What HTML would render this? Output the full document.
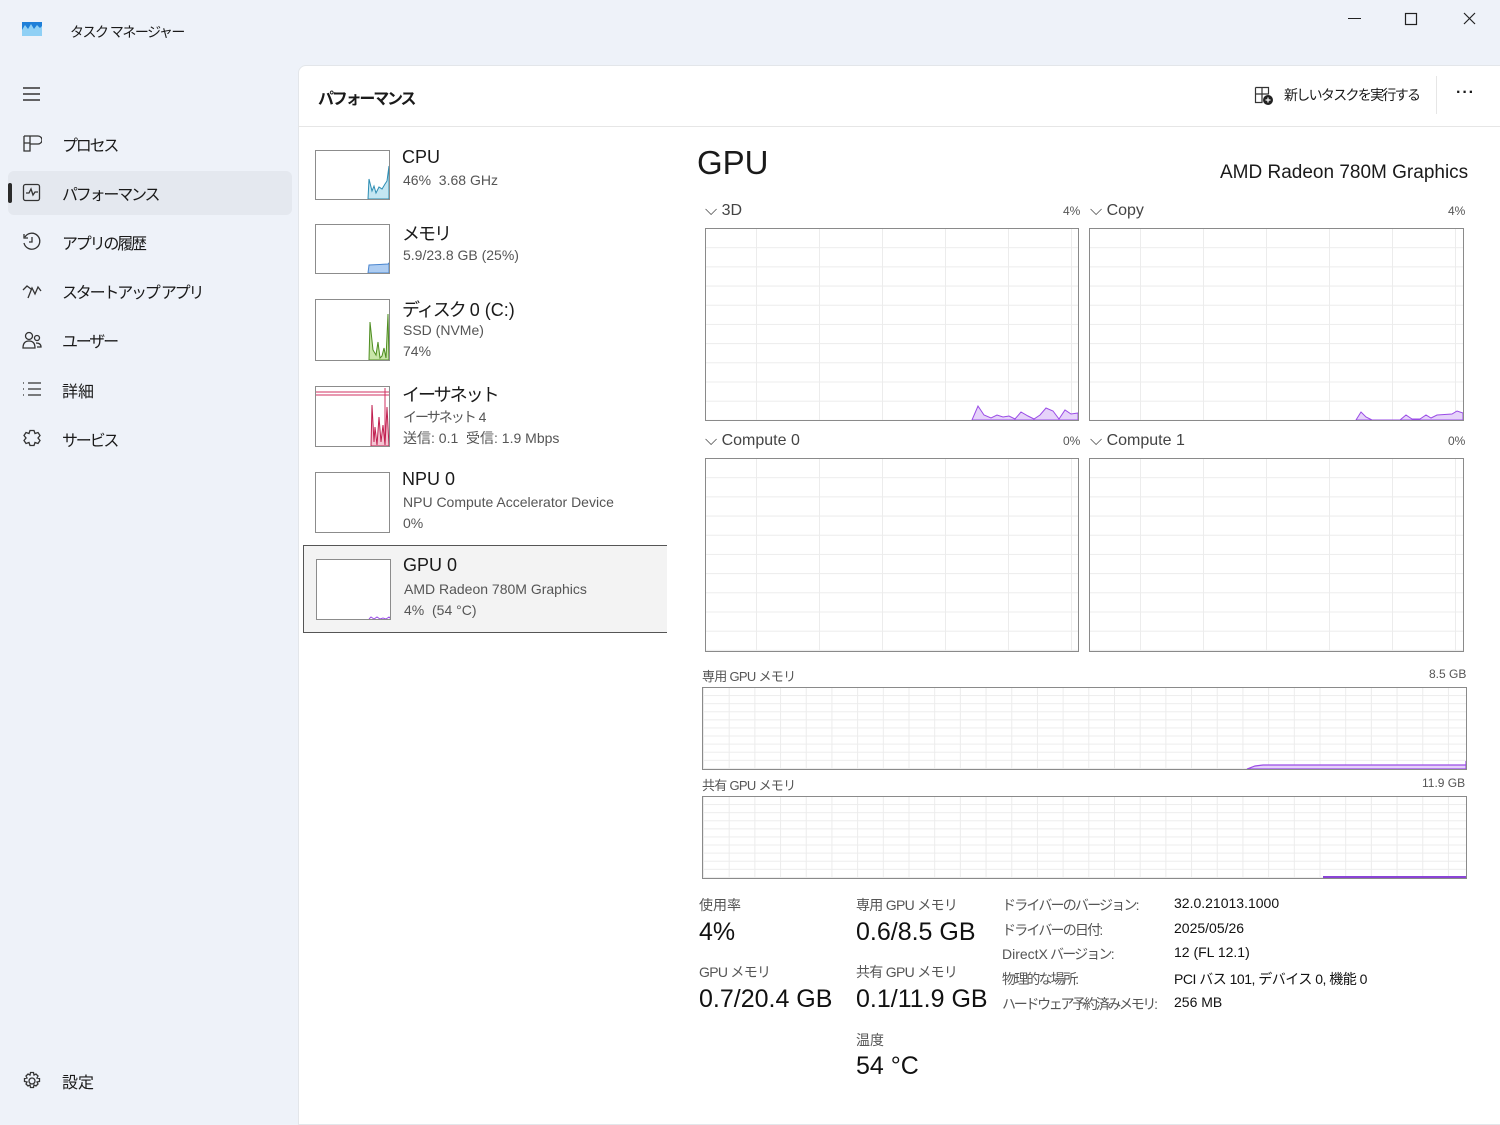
<!DOCTYPE html>
<html><head><meta charset="utf-8"><style>
*{box-sizing:border-box;margin:0;padding:0}
body{width:1500px;height:1112px;overflow:hidden;background:#eef2f9;font-family:"Segoe UI","Liberation Sans","Noto Sans CJK JP",sans-serif;color:#1a1a1a;position:relative}
.a{position:absolute;white-space:nowrap}
.nav{font-size:16px;color:#1a1a1a;letter-spacing:-2.2px}
.panel{position:absolute;left:298px;top:65px;width:1210px;height:1060px;background:#fff;border-top-left-radius:8px;border:1px solid #e3e6ea}
.hdr{position:absolute;left:298px;top:65px;width:1202px;height:62px;border-bottom:1px solid #e6e6e6}
.th{position:absolute;width:75px;border:1px solid #8c8c8c;background:#fff;overflow:hidden}
.t1{font-size:18px}
.t2{font-size:14px;color:#555}
.j{letter-spacing:-2px}
.g{position:absolute;border:1px solid #8a8a8a;background-color:#fff;
background-image:linear-gradient(to right,#ececec 1px,transparent 1px),linear-gradient(to bottom,#ececec 1px,transparent 1px);}
.lbl{font-size:16px;color:#444}
.pc{font-size:12px;color:#555}
.sl{font-size:14px;color:#555}
.sv{font-size:25px;color:#111}
.il{font-size:14px;color:#555;letter-spacing:-1.8px}
.il b{font-weight:normal;letter-spacing:0}
.iv{font-size:14px;color:#111}
</style></head><body>
<svg class="a" style="left:22px;top:22px" width="20" height="14"><rect width="20" height="14" fill="#1e7fd8"/><path d="M0 8 L3 3 L6 7 L9 2 L12 7 L15 3 L18 6 L20 4 L20 14 L0 14Z" fill="#8fd0f5"/></svg>
<div class="a" style="left:70px;top:22px;font-size:14px;letter-spacing:-1.5px">タスク マネージャー</div>
<svg class="a" style="left:1340px;top:8px" width="145" height="22"><path d="M8 10.5h13" stroke="#222" stroke-width="1"/><rect x="65.5" y="5.5" width="11" height="11" fill="none" stroke="#222" stroke-width="1.2"/><path d="M124 5l11 11M135 5l-11 11" stroke="#222" stroke-width="1.2"/></svg>
<svg class="a" style="left:22px;top:86px" width="20" height="16"><path d="M1 2h17M1 8h17M1 14h17" stroke="#333" stroke-width="1.4"/></svg>
<div class="a" style="left:8px;top:171px;width:284px;height:44px;background:#e4e8ef;border-radius:6px"></div>
<div class="a" style="left:8px;top:183px;width:4px;height:20px;background:#2b2b2b;border-radius:2px"></div>
<svg class="a" style="left:22px;top:134px" width="20" height="20" fill="none" stroke="#333" stroke-width="1.3"><path d="M2 2h14a3 3 0 0 1 0 8H8M2 2v15h6V2M2 9h6"/></svg>
<div class="a nav" style="left:62px;top:132px">プロセス</div>
<svg class="a" style="left:22px;top:183px" width="20" height="20" fill="none" stroke="#333" stroke-width="1.3"><rect x="1.5" y="1.5" width="16" height="16" rx="2"/><path d="M4 10h3l2-4 2 6 2-3h3"/></svg>
<div class="a nav" style="left:62px;top:181px">パフォーマンス</div>
<svg class="a" style="left:22px;top:232px" width="20" height="20" fill="none" stroke="#333" stroke-width="1.3"><path d="M3 5A8 8 0 1 1 2 11M2 2v4h4M10 5v5h-3"/></svg>
<div class="a nav" style="left:62px;top:230px">アプリの履歴</div>
<svg class="a" style="left:22px;top:282px" width="20" height="18" fill="none" stroke="#333" stroke-width="1.3"><path d="M1 8l4-4 4 3M6 16l4-10 3 6 3-7 3 4"/></svg>
<div class="a nav" style="left:62px;top:279px">スタートアップ アプリ</div>
<svg class="a" style="left:22px;top:331px" width="20" height="20" fill="none" stroke="#333" stroke-width="1.3"><circle cx="7" cy="5" r="3.5"/><path d="M1 17c0-5 2-7 6-7s6 2 6 7z"/><circle cx="15" cy="7" r="2.5"/><path d="M14 12c3 0 5 1 5 4h-4"/></svg>
<div class="a nav" style="left:62px;top:328px">ユーザー</div>
<svg class="a" style="left:22px;top:381px" width="20" height="16" fill="none" stroke="#333" stroke-width="1.3"><path d="M1 2h1M1 8h1M1 14h1M6 2h13M6 8h13M6 14h13"/></svg>
<div class="a nav" style="left:62px;top:378px;letter-spacing:0">詳細</div>
<svg class="a" style="left:22px;top:429px" width="20" height="20" fill="none" stroke="#333" stroke-width="1.3"><path d="M8 1.5h4l1 3 3-1 2 3-2 2.5 2 2.5-2 3-3-1-1 3H8l-1-3-3 1-2-3 2-2.5L2 6.5l2-3 3 1z"/></svg>
<div class="a nav" style="left:62px;top:427px">サービス</div>
<svg class="a" style="left:22px;top:1071px" width="20" height="20" fill="none" stroke="#333" stroke-width="1.3"><circle cx="10" cy="10" r="3"/><path d="M8.5 1.5h3l.5 2.5 2-1 2 2-1 2 2.5.5v3l-2.5.5 1 2-2 2-2-1-.5 2.5h-3l-.5-2.5-2 1-2-2 1-2-2.5-.5v-3l2.5-.5-1-2 2-2 2 1z"/></svg>
<div class="a nav" style="left:62px;top:1069px;letter-spacing:0">設定</div>
<div class="panel"></div>
<div class="hdr"></div>
<div class="a" style="left:318px;top:85px;font-size:16px;font-weight:600;letter-spacing:-2.2px">パフォーマンス</div>
<svg class="a" style="left:1254px;top:86px" width="20" height="20" fill="none" stroke="#333" stroke-width="1.2"><path d="M1.5 1.5h13v7M1.5 1.5v15h7M1.5 8h13M8 1.5v15"/><circle cx="14" cy="14" r="5" fill="#222" stroke="none"/><path d="M14 11.5v5M11.5 14h5" stroke="#fff"/></svg>
<div class="a" style="left:1284px;top:85px;font-size:14px;letter-spacing:-1.7px">新しいタスクを実行する</div>
<div class="a" style="left:1436px;top:76px;width:1px;height:38px;background:#e6e6e6"></div>
<div class="a" style="left:1456px;top:84px;font-size:16px;letter-spacing:1px;font-weight:bold">···</div>
<div class="th" style="left:315px;top:150px;height:50px"><svg width="75" height="50"><path d="M52 48L53 28 56 40 58 35 60 42 63 36 66 38 69 33 71 30 73 15 73 48Z" fill="#c4e6f2" stroke="#2d8db3" stroke-width="1"/></svg></div>
<div class="a t1" style="left:402px;top:147px">CPU</div><div class="a t2" style="left:403px;top:172px">46%&nbsp; 3.68 GHz</div>
<div class="th" style="left:315px;top:224px;height:50px"><svg width="75" height="50"><path d="M52 48L53 40 72 39 73 38 73 48Z" fill="#aecdf2" stroke="#4b86cf" stroke-width="1"/></svg></div>
<div class="a t1 j" style="left:402px;top:220px">メモリ</div><div class="a t2" style="left:403px;top:247px">5.9/23.8 GB (25%)</div>
<div class="th" style="left:315px;top:299px;height:62px"><svg width="75" height="62"><path d="M53 60L54 22 57 50 60 55 62 42 64 58 66 56 68 48 70 58 72 14 73 60Z" fill="#c8e6a8" stroke="#4e8d21" stroke-width="1"/></svg></div>
<div class="a t1" style="left:402px;top:296px"><span class="j">ディスク</span> 0 (C:)</div><div class="a t2" style="left:403px;top:322px">SSD (NVMe)</div><div class="a t2" style="left:403px;top:343px">74%</div>
<div class="th" style="left:315px;top:386px;height:61px"><svg width="75" height="61"><path d="M0 5h75M0 8h75" stroke="#d03060" stroke-width="1"/><path d="M69 1v60" stroke="#d03060"/><path d="M55 59L56 18 58 55 59 40 61 58 63 30 65 55 67 38 69 58 71 20 73 59Z" fill="#f4c5d3" stroke="#c02050" stroke-width="1"/></svg></div>
<div class="a t1 j" style="left:402px;top:381px">イーサネット</div><div class="a t2" style="left:403px;top:407px"><span class="j">イーサネット</span> 4</div><div class="a t2" style="left:403px;top:428px">送信: 0.1&nbsp; 受信: 1.9 Mbps</div>
<div class="th" style="left:315px;top:472px;height:61px"></div>
<div class="a t1" style="left:402px;top:469px">NPU 0</div><div class="a t2" style="left:403px;top:494px">NPU Compute Accelerator Device</div><div class="a t2" style="left:403px;top:515px">0%</div>
<div class="a" style="left:303px;top:545px;width:364px;height:88px;background:#f3f3f3;border:1px solid #555;border-right:none"></div>
<div class="th" style="left:316px;top:559px;height:61px"><svg width="75" height="61"><path d="M52 59l2-2 3 2 3-2 3 2 3-1 3 1 3-2 2 2" fill="none" stroke="#9a4ce6"/></svg></div>
<div class="a t1" style="left:403px;top:555px">GPU 0</div><div class="a t2" style="left:404px;top:581px">AMD Radeon 780M Graphics</div><div class="a t2" style="left:404px;top:602px">4%&nbsp; (54 °C)</div>
<div class="a" style="left:697px;top:144px;font-size:33px">GPU</div>
<div class="a" style="left:1220px;top:162px;font-size:19px">AMD Radeon 780M Graphics</div>
<div class="a lbl" style="left:705px;top:202px">⌵ 3D</div><div class="a pc" style="left:1063px;top:204px">4%</div>
<div class="a lbl" style="left:1090px;top:202px">⌵ Copy</div><div class="a pc" style="left:1448px;top:204px">4%</div>
<div class="a lbl" style="left:705px;top:432px">⌵ Compute 0</div><div class="a pc" style="left:1063px;top:434px">0%</div>
<div class="a lbl" style="left:1090px;top:432px">⌵ Compute 1</div><div class="a pc" style="left:1448px;top:434px">0%</div>
<div class="g" style="left:705px;top:228px;width:374px;height:193px;background-size:63px 100%,100% 19.2px;background-position:-13px 0,0 -1px"><svg class="a" style="left:0;top:0" width="372" height="191"><path d="M266 191L272 177 278 186 285 189 291 186 297 188 303 187 309 190 315 183 322 187 328 190 334 186 340 179 347 182 353 190 359 181 365 185 372 184 372 191Z" fill="#e6d3fa" stroke="#9a4ce6" stroke-width="1"/></svg></div>
<div class="g" style="left:1089px;top:228px;width:375px;height:193px;background-size:63px 100%,100% 19.2px;background-position:-13px 0,0 -1px"><svg class="a" style="left:0;top:0" width="373" height="191"><path d="M266 191L271 183 276 188 282 191 310 191 316 186 322 190 330 190 336 186 341 189 347 186 362 185 367 182 373 184 373 191Z" fill="#e6d3fa" stroke="#9a4ce6" stroke-width="1"/></svg></div>
<div class="g" style="left:705px;top:458px;width:374px;height:194px;background-size:63px 100%,100% 19.2px;background-position:-13px 0,0 -1px"></div>
<div class="g" style="left:1089px;top:458px;width:375px;height:194px;background-size:63px 100%,100% 19.2px;background-position:-13px 0,0 -1px"></div>
<div class="a sl" style="left:702px;top:666px;font-size:13px;letter-spacing:-0.7px">専用 GPU メモリ</div><div class="a pc" style="left:1429px;top:667px">8.5 GB</div>
<div class="g" style="left:702px;top:687px;width:765px;height:83px;background-size:25.7px 100%,100% 8.1px;background-position:0 0,0 -1px"><svg class="a" style="left:0;top:0" width="763" height="81"><path d="M544 81L552 78 560 77 763 77 763 73 763 81Z" fill="#e6d3fa" stroke="#9a4ce6" stroke-width="1.2"/></svg></div>
<div class="a sl" style="left:702px;top:775px;font-size:13px;letter-spacing:-0.7px">共有 GPU メモリ</div><div class="a pc" style="left:1422px;top:776px">11.9 GB</div>
<div class="g" style="left:702px;top:796px;width:765px;height:83px;background-size:25.7px 100%,100% 8.1px;background-position:0 0,0 -1px"><svg class="a" style="left:0;top:0" width="763" height="81"><path d="M620 80H763" stroke="#8a44d6" stroke-width="2"/></svg></div>
<div class="a sl" style="left:699px;top:895px">使用率</div><div class="a sv" style="left:699px;top:918px">4%</div>
<div class="a sl" style="left:699px;top:962px;letter-spacing:-0.7px">GPU メモリ</div><div class="a sv" style="left:699px;top:985px">0.7/20.4 GB</div>
<div class="a sl" style="left:856px;top:895px;letter-spacing:-0.7px">専用 GPU メモリ</div><div class="a sv" style="left:856px;top:918px">0.6/8.5 GB</div>
<div class="a sl" style="left:856px;top:962px;letter-spacing:-0.7px">共有 GPU メモリ</div><div class="a sv" style="left:856px;top:985px">0.1/11.9 GB</div>
<div class="a sl" style="left:856px;top:1030px">温度</div><div class="a sv" style="left:856px;top:1052px">54 °C</div>
<div class="a il" style="left:1002px;top:895px">ドライバーのバージョン:</div><div class="a iv" style="left:1174px;top:895px">32.0.21013.1000</div>
<div class="a il" style="left:1002px;top:920px">ドライバーの日付:</div><div class="a iv" style="left:1174px;top:920px">2025/05/26</div>
<div class="a il" style="left:1002px;top:944px"><b>DirectX</b> バージョン:</div><div class="a iv" style="left:1174px;top:944px">12 (FL 12.1)</div>
<div class="a il" style="left:1002px;top:969px">物理的な場所:</div><div class="a iv" style="left:1174px;top:969px;letter-spacing:-0.5px">PCI バス 101, デバイス 0, 機能 0</div>
<div class="a il" style="left:1002px;top:994px;letter-spacing:-2.3px">ハードウェア予約済みメモリ:</div><div class="a iv" style="left:1174px;top:994px">256 MB</div>
</body></html>
